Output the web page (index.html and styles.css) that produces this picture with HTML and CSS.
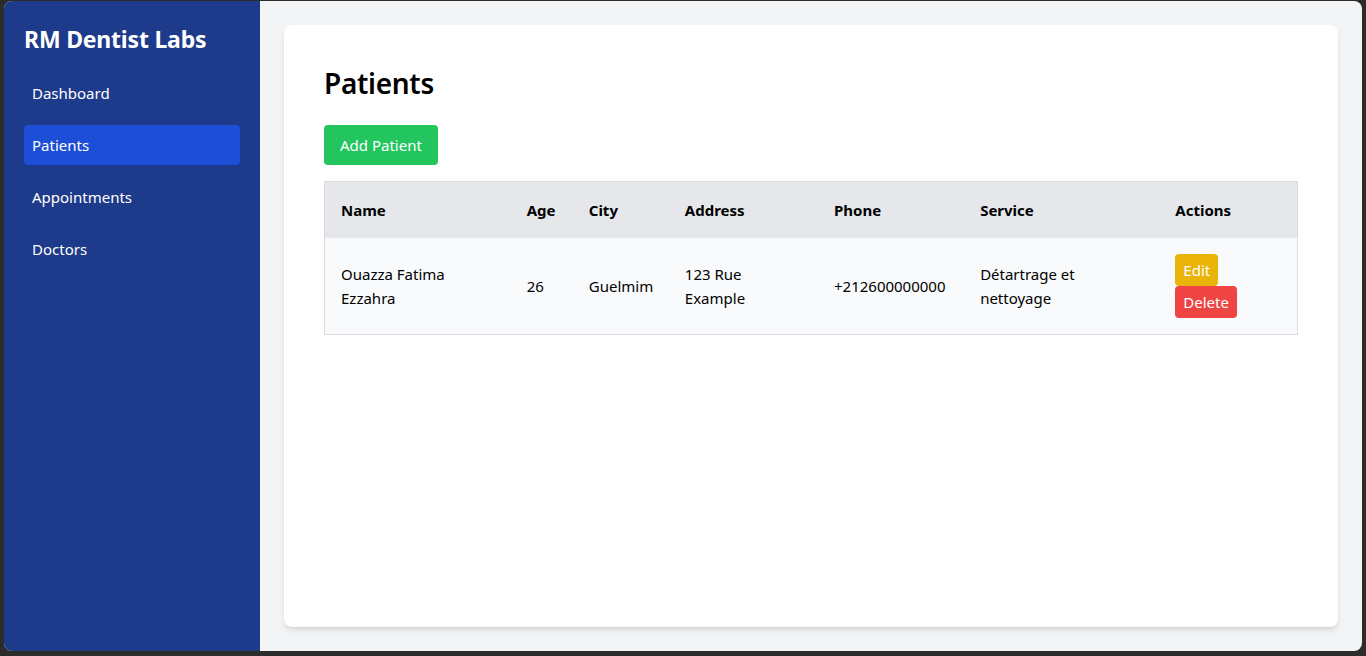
FILE: index.html
```html
<!DOCTYPE html>
<html lang="en">
<head>
<meta charset="utf-8">
<title>RM Dentist Labs - Patients</title>
<link rel="stylesheet" href="styles.css">
</head>
<body>
<div class="app">
  <aside class="sidebar">
    <h1 class="brand">RM Dentist Labs</h1>
    <nav class="nav">
      <a class="nav-item" href="#">Dashboard</a>
      <a class="nav-item active" href="#">Patients</a>
      <a class="nav-item" href="#">Appointments</a>
      <a class="nav-item" href="#">Doctors</a>
    </nav>
  </aside>
  <main class="main">
    <section class="card">
      <h2 class="title">Patients</h2>
      <button class="btn btn-add">Add Patient</button>
      <table class="table">
        <colgroup>
          <col class="c-name"><col class="c-age"><col class="c-city"><col class="c-address"><col class="c-phone"><col class="c-service"><col class="c-actions">
        </colgroup>
        <thead>
          <tr>
            <th>Name</th><th>Age</th><th>City</th><th>Address</th><th>Phone</th><th>Service</th><th>Actions</th>
          </tr>
        </thead>
        <tbody>
          <tr>
            <td>Ouazza Fatima Ezzahra</td>
            <td>26</td>
            <td>Guelmim</td>
            <td>123 Rue Example</td>
            <td>+212600000000</td>
            <td>Détartrage et nettoyage</td>
            <td>
              <div class="actions">
                <button class="btn btn-edit">Edit</button>
                <button class="btn btn-delete">Delete</button>
              </div>
            </td>
          </tr>
        </tbody>
      </table>
    </section>
  </main>
</div>
</body>
</html>
```
FILE: styles.css
```css
* { box-sizing: border-box; }
html, body { margin: 0; height: 100%; }
body {
  background: #2c2c2c;
  padding: 1px 4px 5px 4px;
  font-family: "Noto Sans", "Open Sans", sans-serif;
  font-size: 16px;
  line-height: 24px;
  color: #000;
}
.app {
  display: flex;
  height: 650px;
  border-radius: 8px;
  overflow: hidden;
  background: #f3f4f6;
}
.sidebar {
  width: 256px;
  flex: none;
  background: #1e3a8a;
  color: #fff;
  padding: 22px 20px 20px 20px;
}
.brand {
  margin: 0 0 18px 0;
  font-size: 23px;
  line-height: 32px;
  font-weight: 700;
  letter-spacing: -0.2px;
}
.nav { display: flex; flex-direction: column; gap: 12px; }
.nav-item {
  display: block;
  color: #fff;
  text-decoration: none;
  padding: 8px;
  border-radius: 4px;
  font-size: 15px;
}
.nav-item.active { background: #1d4ed8; }
.main {
  flex: 1;
  padding: 24px;
}
.card {
  background: #fff;
  border-radius: 8px;
  height: 100%;
  padding: 40px;
  box-shadow: 0 4px 6px -1px rgba(0,0,0,0.1), 0 2px 4px -2px rgba(0,0,0,0.1);
}
.title {
  margin: 0 0 24px 0;
  font-size: 28px;
  line-height: 36px;
  font-weight: 600;
  letter-spacing: -0.3px;
}
.btn {
  font-family: inherit;
  border: 0;
  color: #fff;
  border-radius: 4px;
  cursor: pointer;
}
.btn-add {
  background: #22c55e;
  padding: 8px 16px;
  font-size: 15px;
  line-height: 24px;
  margin-bottom: 16px;
  display: block;
}
.table {
  width: 974px;
  border-collapse: collapse;
  table-layout: fixed;
  border: 1px solid #d9dbe0;
  font-size: 15px;
}
.c-name { width: 186px; }
.c-age { width: 62px; }
.c-city { width: 96px; }
.c-address { width: 149px; }
.c-phone { width: 146px; }
.c-service { width: 195px; }
.c-actions { width: 138px; }
.table thead tr { background: #e5e7eb; }
.table tbody tr { background: #f9fafb; }
.table th, .table td {
  padding: 16px;
  text-align: left;
  vertical-align: middle;
  line-height: 24px;
}
.table th { font-weight: 700; }
.actions { display: flex; flex-direction: column; align-items: flex-start; }
.btn-edit, .btn-delete {
  padding: 4px 8px;
  font-size: 15px;
  line-height: 24px;
}
.btn-edit { background: #eab308; }
.btn-delete { background: #ef4444; }
```
